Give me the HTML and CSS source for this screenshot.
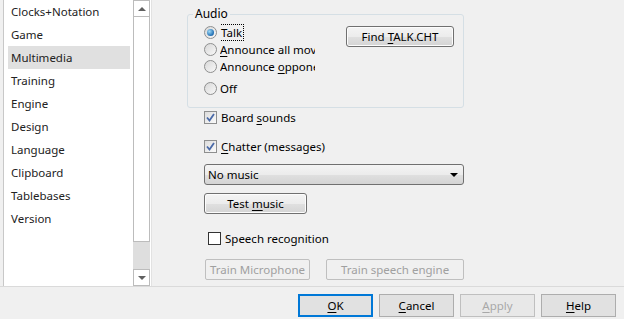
FILE: index.html
```html
<!DOCTYPE html>
<html lang="en">
<head>
  <meta charset="UTF-8">
  <title>Options - Multimedia</title>
  <link rel="stylesheet" href="styles.css">
</head>
<body>
  <div class="dialog">
    <div class="top">
      <!-- page list on the left -->
      <div class="sidebar">
        <ul class="pages">
          <li>Clocks+Notation</li>
          <li>Game</li>
          <li class="selected">Multimedia</li>
          <li>Training</li>
          <li>Engine</li>
          <li>Design</li>
          <li>Language</li>
          <li>Clipboard</li>
          <li>Tablebases</li>
          <li>Version</li>
        </ul>
        <div class="scrollbar">
          <div class="sb-btn"><span class="arrow-up"></span></div>
          <div class="sb-thumb"></div>
          <div class="sb-track"></div>
          <div class="sb-btn"><span class="arrow-down"></span></div>
        </div>
      </div>

      <!-- multimedia page -->
      <div class="content">
        <div class="group">
          <span class="legend">Audio</span>
          <div class="radios">
            <div class="radio-row">
              <span class="radio checked"></span>
              <span class="radio-label"><span class="focus">Talk</span></span>
            </div>
            <div class="radio-row">
              <span class="radio"></span>
              <span class="radio-label"><u>A</u>nnounce all moves</span>
            </div>
            <div class="radio-row">
              <span class="radio"></span>
              <span class="radio-label">Announce <u>o</u>pponent</span>
            </div>
            <div class="radio-row off">
              <span class="radio"></span>
              <span class="radio-label">Off</span>
            </div>
          </div>
          <button class="btn7 find">Find <u>T</u>ALK.CHT</button>
        </div>

        <div class="check-row board">
          <span class="check checked">
            <svg width="9" height="9" viewBox="0 0 9 9"><path d="M1 4.5 L3.5 7.5 L8 1" fill="none" stroke="#4a6aa8" stroke-width="1.8"/></svg>
          </span>
          <span>Board <u>s</u>ounds</span>
        </div>
        <div class="check-row chatter">
          <span class="check checked">
            <svg width="9" height="9" viewBox="0 0 9 9"><path d="M1 4.5 L3.5 7.5 L8 1" fill="none" stroke="#4a6aa8" stroke-width="1.8"/></svg>
          </span>
          <span><u>C</u>hatter (messages)</span>
        </div>

        <div class="select">
          <span>No music</span>
          <span class="select-arrow"></span>
        </div>

        <button class="btn7 test">Test <u>m</u>usic</button>

        <div class="check-row speech">
          <span class="check flat"></span>
          <span>Speech recognition</span>
        </div>

        <div class="train">
          <button class="btn-off mic">Train Microphone</button>
          <button class="btn-off engine">Train speech engine</button>
        </div>
      </div>
    </div>

    <div class="footer">
      <button class="btn10 default"><u>O</u>K</button>
      <button class="btn10"><u>C</u>ancel</button>
      <button class="btn10 disabled"><u>A</u>pply</button>
      <button class="btn10"><u>H</u>elp</button>
    </div>
  </div>
</body>
</html>
```

FILE: styles.css
```css
body {
  margin: 0;
  padding: 0;
  background-color: #f0f0f0;
  font-family: "Noto Sans", "Open Sans", sans-serif;
  font-size: 11.5px;
  color: #000;
}

u {
  text-decoration: underline;
  text-underline-offset: 2px;
}

.dialog {
  width: 624px;
  height: 319px;
  overflow: hidden;
}

.top {
  display: flex;
  height: 286px;
}

/* Left list */
.sidebar {
  display: flex;
  margin-left: 3px;
  width: 146px;
  background-color: #fff;
  border-left: 1px solid #c8c8c8;
  border-right: 1px solid #e2e2e2;
  padding-right: 1px;
}

.pages {
  list-style: none;
  margin: 0;
  padding: 0 3px 0 4px;
  flex: 1;
}

.pages li {
  height: 23px;
  line-height: 23px;
  padding-left: 3px;
  color: #222;
}

.pages li.selected {
  background-color: #e0e0e0;
}

.scrollbar {
  width: 17px;
  display: flex;
  flex-direction: column;
  background-color: #dedede;
}

.sb-btn {
  height: 15px;
  border: 1px solid #bcbcbc;
  background-color: #fff;
  display: flex;
  align-items: center;
  justify-content: center;
}

.arrow-up {
  width: 0;
  height: 0;
  border-left: 4px solid transparent;
  border-right: 4px solid transparent;
  border-bottom: 4px solid #606060;
}

.arrow-down {
  width: 0;
  height: 0;
  border-left: 4px solid transparent;
  border-right: 4px solid transparent;
  border-top: 4px solid #606060;
}

.sb-thumb {
  height: 224px;
  border: 1px solid #bcbcbc;
  border-top: none;
  background-color: #fff;
}

.sb-track {
  flex: 1;
}

/* Right page */
.content {
  flex: 1;
  display: flex;
  flex-direction: column;
  align-items: flex-start;
  padding: 14px 0 0 35px;
}

.group {
  position: relative;
  display: flex;
  align-items: flex-start;
  width: 275px;
  height: 92px;
  border: 1px solid #d5dfe5;
  border-radius: 3px;
}

.legend {
  position: absolute;
  top: -9px;
  left: 5px;
  padding: 0 2px;
  line-height: 16px;
  font-size: 12px;
  background-color: #f0f0f0;
}

.radios {
  display: flex;
  flex-direction: column;
  padding: 9px 0 0 16px;
}

.radio-row {
  display: flex;
  align-items: center;
  height: 17px;
}

.radio-row.off {
  margin-top: 5px;
}

.radio {
  width: 11px;
  height: 11px;
  border: 1px solid #8e8f8f;
  border-radius: 50%;
  background: linear-gradient(135deg, #d8d8d8, #f8f8f8);
  margin-right: 3px;
  position: relative;
}

.radio.checked::after {
  content: "";
  position: absolute;
  left: 2px;
  top: 2px;
  width: 7px;
  height: 7px;
  border-radius: 50%;
  background: radial-gradient(circle at 35% 35%, #9fd8f5, #1f6fb4 70%, #0f3f7a);
}

.radio-label {
  width: 95px;
  white-space: nowrap;
  overflow: hidden;
  line-height: 17px;
}

.focus {
  border: 1px dotted #000;
  padding: 0 1px;
  margin-left: -1px;
}

.btn7 {
  font-family: inherit;
  font-size: 11.5px;
  color: #000;
  height: 21px;
  padding: 0;
  border: 1px solid #707070;
  border-radius: 3px;
  background: linear-gradient(#f4f4f4 0%, #ececec 50%, #e0e0e0 51%, #d4d4d4 100%);
  box-shadow: inset 0 0 0 1px #fcfcfc;
}

.find {
  width: 108px;
  margin: 11px 0 0 31px;
}

.check-row {
  display: flex;
  align-items: center;
  height: 17px;
  margin-left: 17px;
}

.check-row.board {
  margin-top: 1px;
}

.check-row.chatter {
  margin-top: 12px;
}

.check {
  width: 11px;
  height: 11px;
  border: 1px solid #8e8f8f;
  background: linear-gradient(135deg, #dcdcdc, #fbfbfb);
  margin-right: 4px;
  display: flex;
  align-items: center;
  justify-content: center;
}

.check.flat {
  width: 11px;
  height: 11px;
  border: 1px solid #333;
  background: #fff;
  margin-left: 4px;
  margin-right: 4px;
}

.select {
  margin: 9px 0 0 17px;
  width: 255px;
  height: 19px;
  border: 1px solid #707070;
  border-radius: 3px;
  background: linear-gradient(#f4f4f4 0%, #ececec 50%, #e0e0e0 51%, #d4d4d4 100%);
  display: flex;
  align-items: center;
  justify-content: space-between;
  padding: 0 0 0 3px;
  box-sizing: content-box;
}

.select-arrow {
  width: 0;
  height: 0;
  margin-right: 5px;
  border-left: 4px solid transparent;
  border-right: 4px solid transparent;
  border-top: 4px solid #000;
}

.test {
  margin: 8px 0 0 17px;
  width: 103px;
}

.check-row.speech {
  margin-top: 16px;
}

.train {
  display: flex;
  gap: 16px;
  margin: 12px 0 0 18px;
}

.btn-off {
  font-family: inherit;
  font-size: 11.5px;
  height: 21px;
  padding: 0;
  color: #a0a0a0;
  background-color: #f0f0f0;
  border: 1px solid #bfbfbf;
  border-radius: 2px;
}

.btn-off.mic {
  width: 105px;
}

.btn-off.engine {
  width: 138px;
}

/* Bottom buttons */
.footer {
  border-top: 1px solid #dadada;
  display: flex;
  justify-content: flex-end;
  gap: 6px;
  padding: 7px 8px 0 0;
}

.btn10 {
  font-family: inherit;
  font-size: 11.5px;
  color: #000;
  width: 75px;
  height: 23px;
  padding: 0;
  background-color: #e1e1e1;
  border: 1px solid #adadad;
}

.btn10.default {
  border-color: #0078d7;
  box-shadow: inset 0 0 0 1px #0078d7;
}

.btn10.disabled {
  color: #a8a8a8;
  border-color: #bfbfbf;
  background-color: #e8e8e8;
}
```
